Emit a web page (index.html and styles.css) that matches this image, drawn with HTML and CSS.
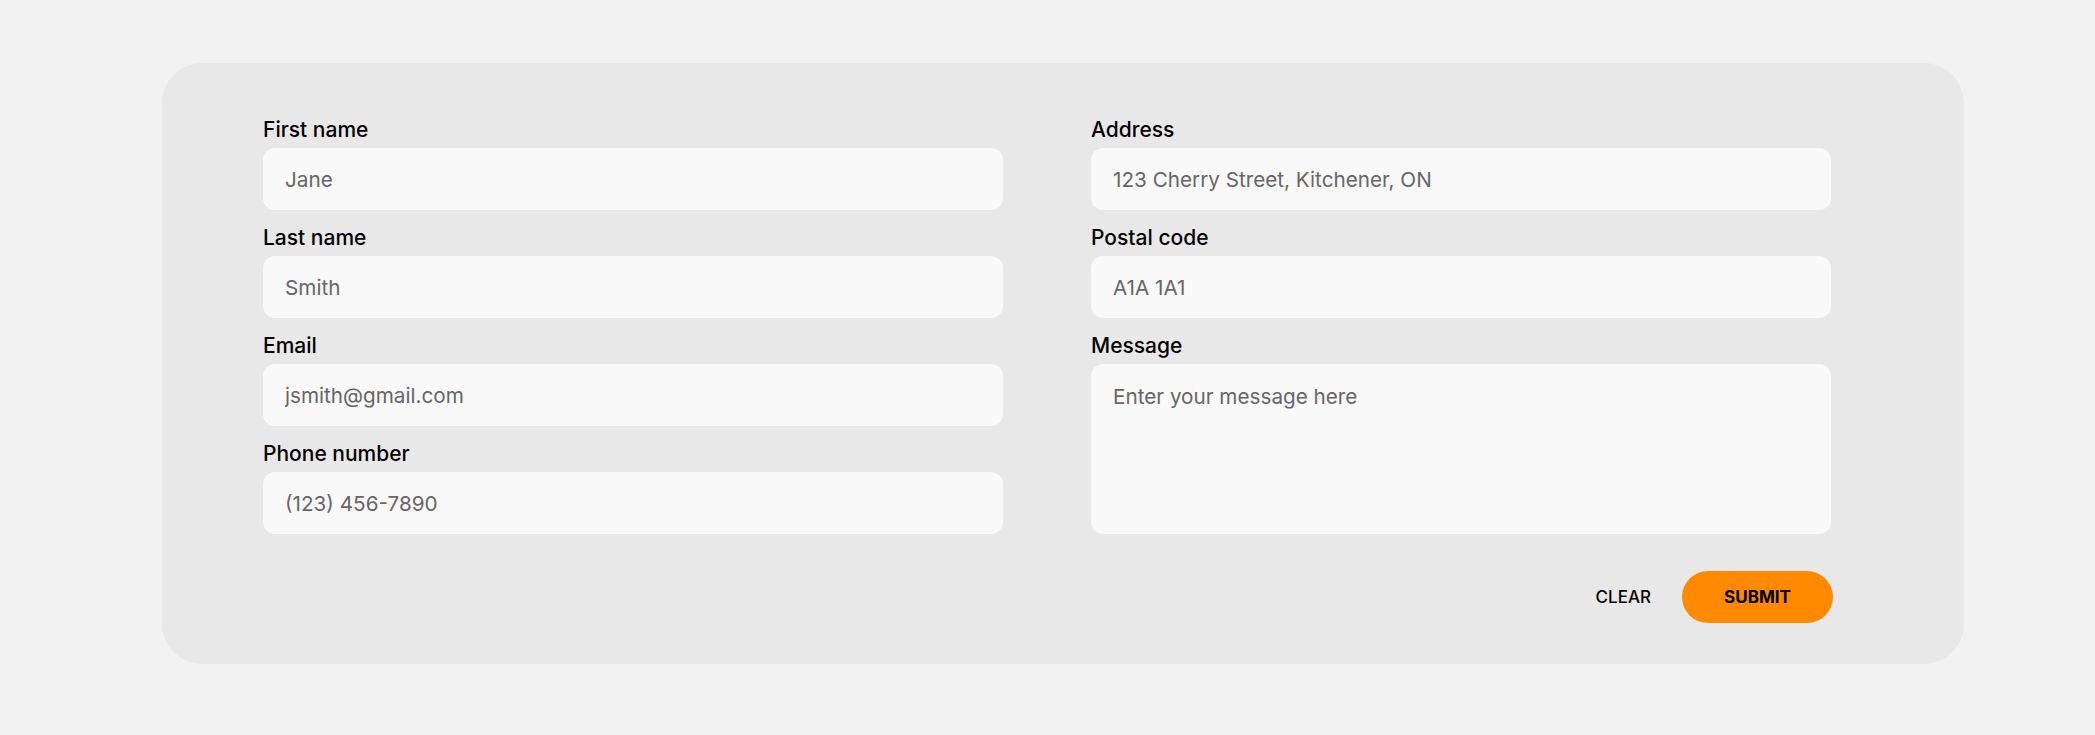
FILE: index.html
```html
<!DOCTYPE html>
<html lang="en">
<head>
<meta charset="utf-8">
<title>Contact form</title>
<link rel="stylesheet" href="styles.css">
</head>
<body>
<main class="page">
  <form class="card">
    <div class="grid">
      <div class="col">
        <label class="field">
          <span class="label">First name</span>
          <input class="input" type="text" placeholder="Jane">
        </label>
        <label class="field">
          <span class="label">Last name</span>
          <input class="input" type="text" placeholder="Smith">
        </label>
        <label class="field">
          <span class="label">Email</span>
          <input class="input" type="email" placeholder="jsmith@gmail.com">
        </label>
        <label class="field">
          <span class="label">Phone number</span>
          <input class="input" type="tel" placeholder="(123) 456-7890">
        </label>
      </div>
      <div class="col">
        <label class="field">
          <span class="label">Address</span>
          <input class="input" type="text" placeholder="123 Cherry Street, Kitchener, ON">
        </label>
        <label class="field">
          <span class="label">Postal code</span>
          <input class="input" type="text" placeholder="A1A 1A1">
        </label>
        <label class="field field-grow">
          <span class="label">Message</span>
          <textarea class="input textarea" placeholder="Enter your message here"></textarea>
        </label>
      </div>
    </div>
    <div class="actions">
      <button class="btn-clear" type="reset">CLEAR</button>
      <button class="btn-submit" type="submit">SUBMIT</button>
    </div>
  </form>
</main>
</body>
</html>
```

FILE: styles.css
```css
* { box-sizing: border-box; }

html, body {
  margin: 0;
  padding: 0;
  background: #f2f2f2;
  font-family: Inter, "Liberation Sans", sans-serif;
}

.page {
  padding: 63px 0 0 162px;
}

.card {
  width: 1802px;
  height: 601px;
  background: #e8e8e8;
  border-radius: 40px;
  padding: 54px 131px 41px 101px;
  display: flex;
  flex-direction: column;
}

.grid {
  display: grid;
  grid-template-columns: 740px 740px;
  column-gap: 88px;
}

.col {
  display: flex;
  flex-direction: column;
  gap: 15px;
}

.field {
  display: flex;
  flex-direction: column;
  gap: 6px;
}

.field-grow {
  flex: 1;
}

.label {
  font-size: 21px;
  line-height: 25px;
  font-weight: 500;
  color: #000;
}

.input {
  display: block;
  width: 100%;
  height: 62px;
  border: none;
  outline: none;
  border-radius: 12px;
  background: #f9f9f9;
  padding: 0 22px;
  font-family: Inter, "Liberation Sans", sans-serif;
  font-size: 20.7px;
  color: #666;
  margin: 0;
}

.input::placeholder {
  color: #666;
  opacity: 1;
}

.textarea {
  height: 170px;
  padding-top: 20px;
  line-height: 25px;
  resize: none;
}

.actions {
  margin-top: 37px;
  display: flex;
  justify-content: flex-end;
  align-items: center;
  gap: 31px;
}

.btn-clear {
  border: none;
  background: transparent;
  padding: 0;
  font-family: Inter, "Liberation Sans", sans-serif;
  font-size: 17px;
  font-weight: 500;
  color: #000;
  cursor: pointer;
}

.btn-submit {
  width: 151px;
  height: 52px;
  border: none;
  border-radius: 26px;
  background: #ff8a00;
  font-family: Inter, "Liberation Sans", sans-serif;
  font-size: 17px;
  font-weight: 700;
  color: #000;
  cursor: pointer;
}
```
